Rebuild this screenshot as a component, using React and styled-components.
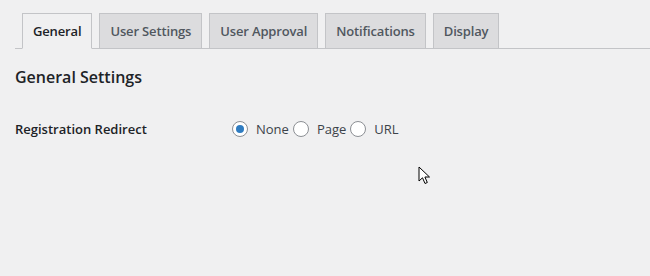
import React, { useState } from "react";
import styled, { createGlobalStyle } from "styled-components";

const Global = createGlobalStyle`
  html, body { margin: 0; padding: 0; background: #f0f0f1; }
  body { font-family: "Open Sans", "Noto Sans", sans-serif; color: #3c434a; }
  * { box-sizing: border-box; }
`;

const Page = styled.div`
  position: relative;
  width: 650px;
  height: 276px;
  padding: 13px 0 0 15px;
  overflow: hidden;
`;

const TabBar = styled.nav`
  display: flex;
  align-items: flex-end;
  gap: 7px;
  padding-left: 7px;
  border-bottom: 1px solid #c3c4c7;
`;

const Tab = styled.a`
  display: block;
  margin-bottom: -1px;
  padding: 5px 10px;
  line-height: 24px;
  font-size: 13px;
  font-weight: 600;
  letter-spacing: -0.15px;
  text-decoration: none;
  border: 1px solid #c3c4c7;
  border-bottom-color: ${(p) => (p.$active ? "#f0f0f1" : "#c3c4c7")};
  background: ${(p) => (p.$active ? "#f0f0f1" : "#dcdcde")};
  color: ${(p) => (p.$active ? "#1d2327" : "#50575e")};
  cursor: pointer;
  white-space: nowrap;
`;

const Heading = styled.h2`
  margin: 16px 0 0;
  font-size: 16px;
  line-height: 24px;
  font-weight: 600;
  color: #1d2327;
`;

const Row = styled.div`
  display: grid;
  grid-template-columns: 217px auto;
  align-items: center;
  margin-top: 30px;
`;

const Label = styled.div`
  font-size: 13px;
  font-weight: 600;
  line-height: 20px;
  color: #1d2327;
`;

const Options = styled.div`
  display: flex;
  align-items: center;
`;

const Option = styled.label`
  display: flex;
  align-items: center;
  font-size: 13px;
  line-height: 20px;
  color: #3c434a;
  margin-right: 4px;
  cursor: pointer;
`;

const Radio = styled.input.attrs({ type: "radio" })`
  appearance: none;
  width: 16px;
  height: 16px;
  margin: 0 8px 0 0;
  border: 1px solid #8c8f94;
  border-radius: 50%;
  background: #fff;
  display: grid;
  place-items: center;
  &:checked::before {
    content: "";
    width: 8px;
    height: 8px;
    border-radius: 50%;
    background: #2f7cc1;
  }
`;

const Cursor = styled.svg`
  position: absolute;
  left: 418px;
  top: 166px;
`;

const tabs = ["General", "User Settings", "User Approval", "Notifications", "Display"];

export default function App() {
  const [choice, setChoice] = useState("none");
  return (
    <Page>
      <Global />
      <TabBar>
        {tabs.map((t, i) => (
          <Tab key={t} $active={i === 0}>{t}</Tab>
        ))}
      </TabBar>
      <Heading>General Settings</Heading>
      <Row>
        <Label>Registration Redirect</Label>
        <Options>
          {[["none", "None"], ["page", "Page"], ["url", "URL"]].map(([v, l]) => (
            <Option key={v}>
              <Radio name="redirect" checked={choice === v} onChange={() => setChoice(v)} />
              {l}
            </Option>
          ))}
        </Options>
      </Row>
      <Cursor width="14" height="20" viewBox="0 0 14 20">
        <path d="M1 1 L1 15 L4.5 11.8 L7 17.5 L9.3 16.5 L6.9 11 L11.5 11 Z" fill="#fff" stroke="#000" strokeWidth="1" strokeLinejoin="round" />
      </Cursor>
    </Page>
  );
}
